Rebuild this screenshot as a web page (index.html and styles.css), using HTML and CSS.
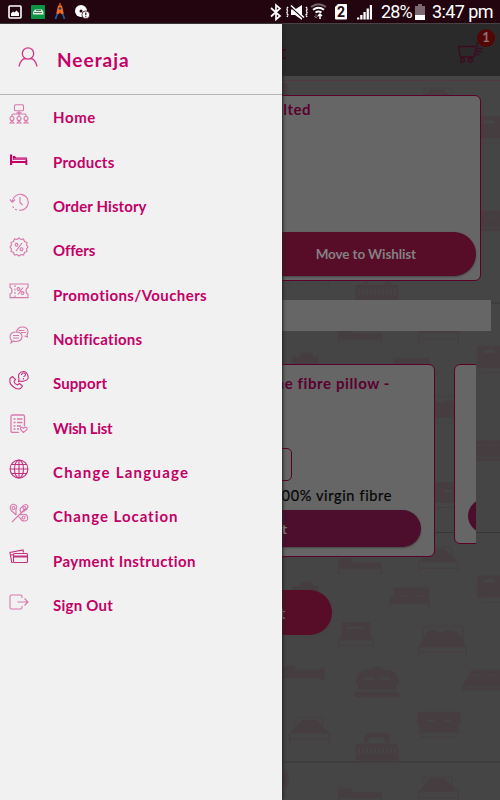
FILE: index.html
```
<!DOCTYPE html>
<html lang="en">
<head>
<meta charset="utf-8">
<title>Menu</title>
<link rel="stylesheet" href="styles.css">
</head>
<body>
<div class="screen">
  <header class="status">
    <div class="status-left">
      <svg width="14" height="14" viewBox="0 0 14 14"><rect x="1" y="1" width="12" height="12" rx="1" fill="none" stroke="#fff" stroke-width="1.6"/><path d="M3 11V8.500l2-2 1.500 1 2-2L11 8v3z" fill="#fff"/></svg>
      <svg width="14" height="14" viewBox="0 0 14 14"><rect width="14" height="14" rx="1" fill="#079443"/><path d="M2 7l2-2.500h7l1.500 2.500v2.500H2z" fill="#dfe9df"/><path d="M3 7.500h8M5 5.500h5" stroke="#53795f"/></svg>
      <svg width="12" height="17" viewBox="0 0 12 17"><path d="M4 9L1.500 16M8 9l2.500 7" stroke="#1d5b96" stroke-width="1.800" fill="none"/><path d="M6 0v3M4.500 3h3l1.500 7-1.500.5L6 8l-1.500 2.500L3 10z" stroke="#f26a21" stroke-width="1.200" fill="#f26a21"/><circle cx="6" cy="5.500" r="1.300" fill="#1d4060"/></svg>
      <svg width="15" height="14" viewBox="0 0 15 14"><circle cx="6" cy="6" r="6" fill="#fff"/><circle cx="6" cy="6" r="1.500" fill="#230510"/><circle cx="10.800" cy="9.800" r="3.900" fill="#fff" stroke="#230510" stroke-width=".8"/><path d="M10.800 7.600v2.700m0 1v1" stroke="#230510" stroke-width="1.200"/></svg>
    </div>
    <div class="status-right">
      <svg width="150" height="24" viewBox="0 0 150 24">
        <g fill="none" stroke="#fff">
          <path d="M3 8l9 8-4 3.500V5l4 3.500-9 8" stroke-width="1.700"/>
          <path d="M20 7l-1.500 2L20 11l-1.500 2L20 15l-1 2M38 7l1.500 2L38 11l1.500 2L38 15l1 2" stroke-width="1.400" stroke-dasharray="2 .7"/>
          <path d="M23 9.500h4l7-4.500v15l-7-5h-4z" fill="#fff" stroke="none"/>
          <path d="M23 7L36 19" stroke="#230510" stroke-width="1.500"/><path d="M23 5.500L36 17.500" stroke-width="1.600"/>
          <path d="M43 7q7.500-5.500 15 0" stroke="#75646c" stroke-width="1.800"/>
          <path d="M45 9.800q5.500-4 11 0M47.500 12.500q3-2 6 0" stroke-width="1.900"/>
          <path d="M48 14v4m-2-2l2 2 2-2" stroke="#75646c"/><path d="M52 19v-5m-2 2l2-2 2 2" stroke-width="1.500"/>
        </g>
        <path d="M70 4h8q1 0 1 1v13.500q0 1-1 1H68q-1 0-1-1V7z" fill="#fff"/><text x="73" y="16.800" text-anchor="middle" class="sim">2</text>
        <path d="M89 19.500v-2h2.300v2zM92.200 19.500v-4.500h2.300v4.500zM95.400 19.500v-7.500h2.300v7.500zM98.600 19.500V8.500h2.300v11zM101.800 19.500V5h2.200v14.500z" fill="#fff"/>
      </svg>
      <span class="battery-text">28%</span>
      <svg class="battery" width="10" height="16" viewBox="0 0 10 16"><path d="M3 0h4v2h3v9H0V2h3z" fill="#7c6871"/><path d="M0 11h10v5H0z" fill="#fff"/></svg>
      <span class="clock">3:47 pm</span>
    </div>
  </header>

  <main class="page">
    <svg class="wallpaper" width="500" height="776" aria-hidden="true">
      <defs>
        <pattern id="beds" width="500" height="229.500" patternUnits="userSpaceOnUse" patternTransform="translate(0 49)">
          <path d="M0 .5h500" stroke="#383536"/>
          <g fill="#453d3f" stroke="#453d3f" stroke-width="1">
            <path d="M338.500 25v17M338.500 37h43v4M381.500 42V31" fill="none"/><path d="M339 31l2-4h9l3 4h28v5h-42z"/>
            <path d="M424 24v-7q0-2 3-2h22q3 0 3 2v7M419 41V30M458 41V30M419 36.500h39" fill="none"/><path d="M426 22l4-5h14l5 5 9 8h-39z"/>
            <path d="M293 62v-8l4 1 5-4q4-2 9 0l3 4 4-1v8z"/>
            <path fill-rule="evenodd" d="M394 56h35v9h-35zM398 63h10l-1 2h-8zM413 63h10l1 2h-10zM390 65h39v6h-39zM390 71v7M429 71v7"/>
            <path fill-rule="evenodd" d="M477.500 44H500v13l5 8h-28zM483 47h12v4h-12z"/><path d="M480 65v5h25" fill="none"/>
            <path fill-rule="evenodd" d="M342 90h28v8h-28zM346 94h18v3h-18zM344 98h24l5 10h-34zM339 108v8M373 108v8M340 113h32"/>
            <path d="M423 107V96q0-2 3-2h34q3 0 3 2v11M419 115v9M466 115v9M419 120h47" fill="none"/><path d="M423 107l4-7 6-2 8 3 8-3 8 2 6 7 3 8h-47z"/>
            <path d="M270 136h13l4-2h6l4 4h22l2-2h3v12h-3v-2h-51z"/>
            <path fill-rule="evenodd" d="M356 150q1-9 9-12l6 1q2-4 6-4 5 0 7 4l6-1q8 3 9 12l-4 5 4 7v3h-44v-3l4-7zM363 145h11v3h-11zM380 145h11v3h-11z"/><path d="M357 159h41" stroke="#454545" stroke-width="2"/>
            <path fill-rule="evenodd" d="M472 138h33v20h-42v-5zM475 142h9l-1 2h-9zM490 142h9v2h-9z"/><path d="M465 155h40" stroke="#454545"/>
            <path d="M296 193v-6q0-2 3-2h21q3 0 3 2v6M290 212v-11M329 212v-11M290 207h39" fill="none"/><path d="M298 193l5-5h13l5 5 8 8h-39z"/>
            <path fill-rule="evenodd" d="M418 180h42v13l-3 3 3 4h-42l3-4-3-3zM427 187h9l-2 3h-9zM443 187h7l2 3h-9z"/><path d="M421 200v5h36v-5" fill="none"/>
            <path d="M364 210l1-7q1-2 4-2h16q3 0 4 2l1 7h-4l-3-5h-13l-3 5zM356 214q0-2 3-2h36q3 0 3 2v14h-42z"/><path d="M359 215v7M363 215v7M367 215v7M371 215v7M375 215v7M379 215v7M383 215v7M387 215v7M391 215v7M395 215v7" stroke="#454545" stroke-width="1.400"/>
            <path d="M282 11q5-2 6 2v11q-4 4-6 0z"/>
          </g>
        </pattern>
      </defs>
      <rect y="49" width="500" height="727" fill="url(#beds)"/>
      <path d="M0 56.500h500" stroke="#523940"/>
    </svg>

    <div class="topbar">
      <h1 class="topbar-title">Cart</h1>
      <div class="cart">
        <svg width="29" height="26" viewBox="0 0 29 26" fill="none" stroke="#3e0a20" stroke-width="1.300"><path d="M18 9.500H1.500l2 10.500H17l3.500-14 3-2M20 11.500h6M19.500 14.500h5M18.500 17.500h4"/><circle cx="5.500" cy="23.300" r="1.900"/><circle cx="13.500" cy="23.300" r="1.900"/></svg>
        <span class="badge">1</span>
      </div>
    </div>

    <section class="card item">
      <h2 class="item-name">Quilted</h2>
      <button class="pill wishlist">Move to Wishlist</button>
    </section>
    <div class="strip"></div>
    <section class="carousel">
      <article class="card product">
        <h2 class="product-name">ne fibre pillow -</h2>
        <span class="quantity"></span>
        <p class="product-note">100% virgin fibre</p>
        <button class="pill add">Cart</button>
      </article>
      <article class="card next"><span class="pill next-add"></span></article>
    </section>
    <button class="pill checkout">Cart</button>
  </main>

  <nav class="drawer">
    <div class="profile">
      <svg width="20" height="20" viewBox="0 0 20 20" fill="none" stroke="#cf3a8a" stroke-width="1.300"><circle cx="10" cy="6.500" r="5.700"/><path d="M1 19.500q1.500-7 6-8M19 19.500q-1.500-7-6-8"/></svg>
      <span class="name">Neeraja</span>
    </div>
    <ul class="menu">
      <li><svg viewBox="0 0 20 20"><rect x="5.500" y=".8" width="9" height="6" rx="1"/><path d="M10 7v6M7.500 8.800h5M3 13v-2q0-1 1-1h12q1 0 1 1v2"/><circle cx="3" cy="14.500" r="2"/><circle cx="10" cy="14.500" r="2"/><circle cx="17" cy="14.500" r="2"/><path d="M1 19q2-3 4 0zM8 19q2-3 4 0zM15 19q2-3 4 0z"/></svg><span class="home">Home</span></li>
      <li><svg viewBox="0 0 20 20" class="solid"><path d="M1 4.500h2.200V11H16.500v-1.500h1.800v5.500H16.500v-2H3.200v2H1zM4 6l1.800 0 1.500 1.500h10.700V10H4z"/><path d="M4.500 9h13" stroke="#f1f1f1" stroke-width=".6"/></svg><span class="products">Products</span></li>
      <li><svg viewBox="0 0 20 20"><path d="M3.300 9.500A8 8 0 1 1 10 18.200M8 18l-2-.8M4.700 16l-1.100-1.700M.8 7.500l2.500 2.600L6 7.500"/><path d="M11 5v5.500l2.500 2.500"/></svg><span class="orders">Order History</span></li>
      <li><svg viewBox="0 0 20 20"><path d="M10 1l2 1.500 2.500-.5 1 2.500L18 5.500 17.500 8 19 10l-1.500 2 .5 2.500-2.500 1-1 2.500-2.500-.5L10 19l-2-1.500-2.500.5-1-2.500-2.500-1 .5-2.500L1 10l1.500-2L2 5.500l2.500-1 1-2.500 2.500.5zM13 6l-6 8"/><circle cx="7.500" cy="7.800" r="1.400"/><circle cx="12.500" cy="12.200" r="1.400"/></svg><span class="offers">Offers</span></li>
      <li><svg viewBox="0 0 20 20"><path d="M1 3h18v3.500q-2 .5-2 3.300t2 3.300v3.500H1v-3.500q2-.5 2-3.300T1 6.500z"/><path d="M6 4v12" stroke-dasharray="2 1.500"/><path d="M14 6.500l-5 7"/><circle cx="9.500" cy="8" r="1.400"/><circle cx="13.500" cy="12" r="1.400"/></svg><span class="promotions">Promotions/Vouchers</span></li>
      <li><svg viewBox="0 0 20 20"><path d="M7.500 7q1-5 6-5t5.500 4.500q0 2-1 3l.5 2.500-3-1M9.500 5.500h6M12 7.500h5"/><path d="M2.500 15q-1.500-1-1.500-3 0-5 6-5t6 4.500-6 5q-1.500 0-2.500-.5L2 18zM4 10.500h6M4 13h6"/></svg><span class="notifications">Notifications</span></li>
      <li><svg viewBox="0 0 20 20" class="dark"><path d="M1.500 8l2-1.500 3 3-1.500 2q.5 2.500 3.500 3.500l2-1.500 3 2.500-2 2.500q-3 1.500-7-1.500T1 11q-.5-2 .5-3z"/><path d="M10.500 11l-1 .5.500-3q-1-2 0-4.500Q12 1 15 1.500T19 6t-4 5q-2 .8-4.500 0zM12.500 5q0-2 2-2t2 1.700q0 1-2 2M14.500 8v1.500"/></svg><span class="support">Support</span></li>
      <li><svg viewBox="0 0 20 20"><path d="M10 18.300H3.500q-1.500 0-1.500-1.500V2.500Q2 1 3.500 1H14q1.500 0 1.500 1.500V12M4.500 5h2M8 5h5.500M4.500 8.500h2M8 8.500h5.500M4.500 12h2M8 12h4M4.500 15h2M8 15h2" stroke-width="1.300"/><path d="M14.500 18.500l-3-3q-.5-2.500 1.500-2.500l1.500 1.200L16 13q2.500 0 2 2.500z"/></svg><span class="wish">Wish List</span></li>
      <li><svg viewBox="0 0 20 20" class="dark"><circle cx="10" cy="10" r="8.900"/><ellipse cx="10" cy="10" rx="4.500" ry="8.900"/><path d="M10 1v18M1 10h18M2.500 5.500h15M2.500 14.500h15"/></svg><span class="language">Change Language</span></li>
      <li><svg viewBox="0 0 20 20"><path d="M3 19L17 5M7 12L4 9Q.5 7 1.500 3q2-3 5-1 2 1 .5 4v6M12 10l-1-3q0-2 3-4 3-3 5 0 0 3-3 4.500zM9 13q2-2 4-1.500 5-1 5.500 2.500 1 4-3 4-3 0-4-2.500z"/><circle cx="4.500" cy="5" r="1.500"/><circle cx="15.500" cy="5" r="1.500"/><circle cx="14.500" cy="14.500" r="1.500"/></svg><span class="location">Change Location</span></li>
      <li><svg viewBox="0 0 20 20" class="dark"><path d="M4 15.500l-1.300-.3L1 5.500 14 3l.7 2.500M2 8l3-.5"/><rect x="4.500" y="6.500" width="14" height="9" rx="1"/><path d="M5 9.500h13" stroke-width="2"/></svg><span class="payment">Payment Instruction</span></li>
      <li><svg viewBox="0 0 20 20"><path d="M13 6V4.500Q13 3 11.500 3h-9Q1 3 1 4.500v11Q1 17 2.500 17h9q1.500 0 1.500-1.500V14M8.500 10H19M15.500 6.500L19 10l-3.500 3.500"/></svg><span class="signout">Sign Out</span></li>
    </ul>
  </nav>
</div>
</body>
</html>
```
FILE: styles.css
```
* { box-sizing: border-box; }
body { margin: 0; font-family: Lato, sans-serif; }
h1, h2, p, ul { margin: 0; padding: 0; }
button { border: 0; font: inherit; }
.screen { position: relative; width: 500px; height: 800px; overflow: hidden; display: flex; flex-direction: column; background: #454545; }

.status { height: 24px; flex: none; display: flex; justify-content: space-between; background: #230510; color: #fff; font-family: Roboto, sans-serif; border-bottom: 1px solid #484044; }
.status-left { display: flex; align-items: center; gap: 9px; padding-left: 8px; }
.status-right { display: flex; align-items: center; width: 232px; font-size: 18px; line-height: 24px; }
.status-right > svg:first-child { flex: none; margin-right: -37px; }
.sim { font: 700 14px Roboto, sans-serif; fill: #230510; }
.battery-text { flex: none; letter-spacing: -.9px; width: 34px; padding-top: 1px; }
.battery { flex: none; margin-right: 7px; }
.clock { white-space: nowrap; letter-spacing: -.6px; padding-top: 1px; }

.page { position: relative; height: 776px; overflow: hidden; }
.page > .wallpaper { position: absolute; left: 0; top: 0; width: 500px; height: 776px; }
.page > :not(.wallpaper) { position: relative; }
.topbar { height: 52px; background: #2a2a2a; display: flex; justify-content: space-between; padding: 17px 5px 0 0; }
.topbar-title { width: 286px; text-align: right; font-size: 18px; line-height: 22px; color: #3f001d; }
.cart { position: relative; width: 38px; height: 24px; margin-top: -4px; }
.badge { position: absolute; right: 0; top: -8px; width: 18px; height: 18px; border-radius: 50%; background: #530606; color: #8a7474; font-size: 13px; font-weight: 700; line-height: 17px; text-align: center; }

.card { background: #666; border: 1px solid #5c0027; border-radius: 6px; }
.item { width: 466px; height: 186px; margin: 19px 0 0 15px; padding: 4px 4px 4px; display: flex; flex-direction: column; justify-content: space-between; }
.item-name { width: 291px; text-align: right; font-size: 15px; line-height: 19px; letter-spacing: .5px; color: #5a0030; }
.pill { display: flex; align-items: center; justify-content: flex-end; border-radius: 30px; background: #570c28; color: #858083; font-weight: 700; box-shadow: 0 1px 2px #444; }
.wishlist { height: 44px; padding: 0 60px; font-size: 13.500px; letter-spacing: -.12px; }
.strip { width: 476px; height: 31px; margin: 19px 0 0 15px; background: #666; }
.carousel { width: 461px; margin: 33px 0 0 15px; display: flex; align-items: flex-start; gap: 19px; overflow: hidden; }
.product { flex: none; width: 420px; height: 193px; padding: 8px 13px 9px 14px; display: flex; flex-direction: column; }
.product-name { width: 360px; text-align: right; font-size: 15px; line-height: 20px; letter-spacing: .6px; color: #5a0030; }
.quantity { width: 60px; height: 33px; margin: 55px 0 0 202px; border: 1px solid #5c0027; border-radius: 5px; }
.product-note { width: 362px; margin-top: 5px; text-align: right; font-size: 14.500px; line-height: 20px; letter-spacing: .65px; color: #050505; -webkit-text-stroke: .2px #050505; }
.add { height: 37px; flex: none; margin-top: 4px; padding: 0 134px; background: #4c0e2c; font-size: 14px; }
.next { flex: none; width: 420px; height: 180px; padding: 134px 13px 0; }
.next-add { height: 34px; background: #4c0e2c; box-shadow: none; }
.checkout { width: 317px; height: 45px; margin: 33px 0 0 15px; padding: 0 47px; font-size: 15px; }

.drawer { position: absolute; left: 0; top: 24px; width: 282px; height: 776px; background: #f1f1f1; box-shadow: 1px 0 3px #222; color: #c20067; font-weight: 700; }
.profile { height: 71px; display: flex; padding: 23px 18px 0; gap: 19px; border-bottom: 1px solid #b5b5b5; }
.name { font-size: 19px; line-height: 26px; letter-spacing: 1px; }
.menu { list-style: none; }
.menu li { height: 44.360px; display: flex; align-items: center; padding-left: 9px; gap: 24px; font-size: 15px; white-space: nowrap; }
.menu svg { width: 20px; height: 20px; flex: none; margin-top: -7px; fill: none; stroke: #d978ad; stroke-width: 1.100; }
.menu svg.dark { stroke: #c6317f; }
.menu svg.solid { fill: #c20067; stroke: none; margin-top: -4px; }
.home { letter-spacing: .6px; }
.products { letter-spacing: .25px; }
.orders { letter-spacing: .1px; }
.offers { letter-spacing: -.1px; }
.promotions { letter-spacing: .4px; }
.notifications { letter-spacing: .25px; }
.support { letter-spacing: .1px; }
.wish { letter-spacing: -.3px; }
.language { letter-spacing: 1.250px; }
.location { letter-spacing: .95px; }
.payment { letter-spacing: .4px; }
.signout { letter-spacing: .25px; }
```
